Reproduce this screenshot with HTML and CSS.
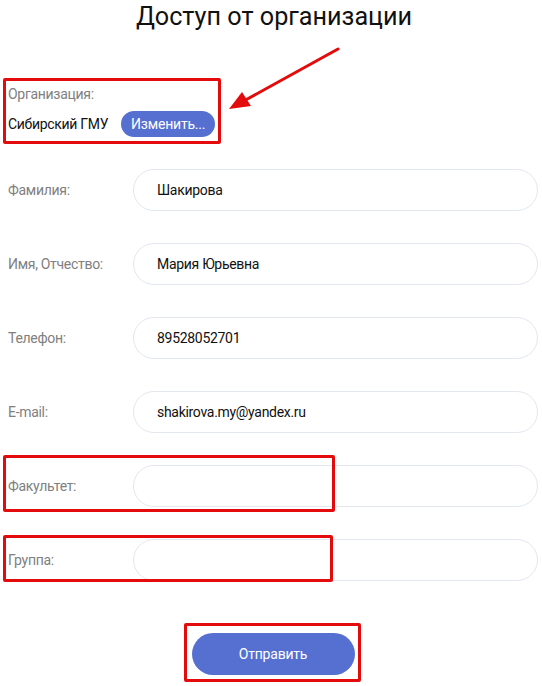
FILE: index.html
```html
<!DOCTYPE html>
<html lang="ru">
<head>
<meta charset="utf-8">
<title>Доступ от организации</title>
<link rel="stylesheet" href="styles.css">
</head>
<body>
<div class="page">
  <h1 class="title">Доступ от организации</h1>

  <section class="org">
    <div class="label">Организация:</div>
    <div class="org-row">
      <span class="org-name">Сибирский ГМУ</span>
      <button class="btn btn-small" type="button">Изменить...</button>
    </div>
  </section>

  <form class="fields">
    <div class="row"><label class="label">Фамилия:</label><input class="field" type="text" value="Шакирова"></div>
    <div class="row"><label class="label">Имя, Отчество:</label><input class="field" type="text" value="Мария Юрьевна"></div>
    <div class="row"><label class="label">Телефон:</label><input class="field" type="text" value="89528052701"></div>
    <div class="row"><label class="label">E-mail:</label><input class="field" type="text" value="shakirova.my@yandex.ru"></div>
    <div class="row"><label class="label">Факультет:</label><input class="field" type="text" value=""></div>
    <div class="row"><label class="label">Группа:</label><input class="field" type="text" value=""></div>
    <div class="submit-wrap"><button class="btn btn-submit" type="button">Отправить</button></div>
  </form>

  <div class="mark mark-org"></div>
  <div class="mark mark-fac"></div>
  <div class="mark mark-grp"></div>
  <div class="mark mark-submit"></div>
  <svg class="arrow" width="130" height="80" viewBox="0 0 130 80">
    <line x1="118" y1="9" x2="22" y2="62" stroke="#e30b0b" stroke-width="3" stroke-linecap="round"/>
    <polygon points="9,69 22,52 31,66" fill="#e30b0b"/>
  </svg>
</div>
</body>
</html>
```

FILE: styles.css
```css
* { box-sizing: border-box; }
html, body { margin: 0; padding: 0; background: #fff; }
body {
  font-family: Roboto, "Noto Sans", "Liberation Sans", sans-serif;
  font-size: 14px;
  color: #111;
}
.page {
  position: relative;
  width: 542px;
  height: 686px;
  padding: 0 4px 0 8px;
}
.title {
  margin: 0;
  height: 34px;
  line-height: 34px;
  font-size: 25.2px;
  font-weight: 400;
  text-align: center;
  color: #111;
  padding-left: 2px;
}
.org { margin-top: 50px; }
.label {
  color: #808080;
  font-size: 14px;
  line-height: 20px;
  letter-spacing: -0.3px;
}
.org-row {
  margin-top: 7px;
  display: flex;
  align-items: center;
  gap: 13px;
  height: 26px;
}
.org-name { color: #111; letter-spacing: -0.3px; }
.btn {
  border: none;
  background: #5670d2;
  color: #fff;
  font-family: inherit;
  font-size: 14px;
  letter-spacing: -0.2px;
  cursor: pointer;
}
.btn-small {
  height: 26px;
  padding: 0;
  border-radius: 13px;
  width: 94px;
}
.fields {
  margin: 32px 0 0;
  display: flex;
  flex-direction: column;
  gap: 32px;
}
.row {
  display: grid;
  grid-template-columns: 125px 405px;
  align-items: center;
  height: 42px;
}
.field {
  width: 405px;
  height: 42px;
  border: 1px solid #e3e7ef;
  border-radius: 21px;
  padding: 0 20px 0 23px;
  font-family: inherit;
  font-size: 14px;
  letter-spacing: -0.3px;
  color: #111;
  background: #fff;
  outline: none;
}
.submit-wrap {
  display: flex;
  justify-content: center;
  margin-top: 20px;
}
.btn-submit {
  width: 163px;
  height: 42px;
  border-radius: 21px;
}
.mark {
  position: absolute;
  border: 3px solid #e30b0b;
  border-radius: 2px;
}
.mark-org { left: 3px; top: 78px; width: 218px; height: 66px; }
.mark-fac { left: 3px; top: 455px; width: 332px; height: 57px; }
.mark-grp { left: 3px; top: 535px; width: 330px; height: 47px; }
.mark-submit { left: 184px; top: 623px; width: 177px; height: 59px; }
.arrow { position: absolute; left: 220px; top: 40px; }
```
